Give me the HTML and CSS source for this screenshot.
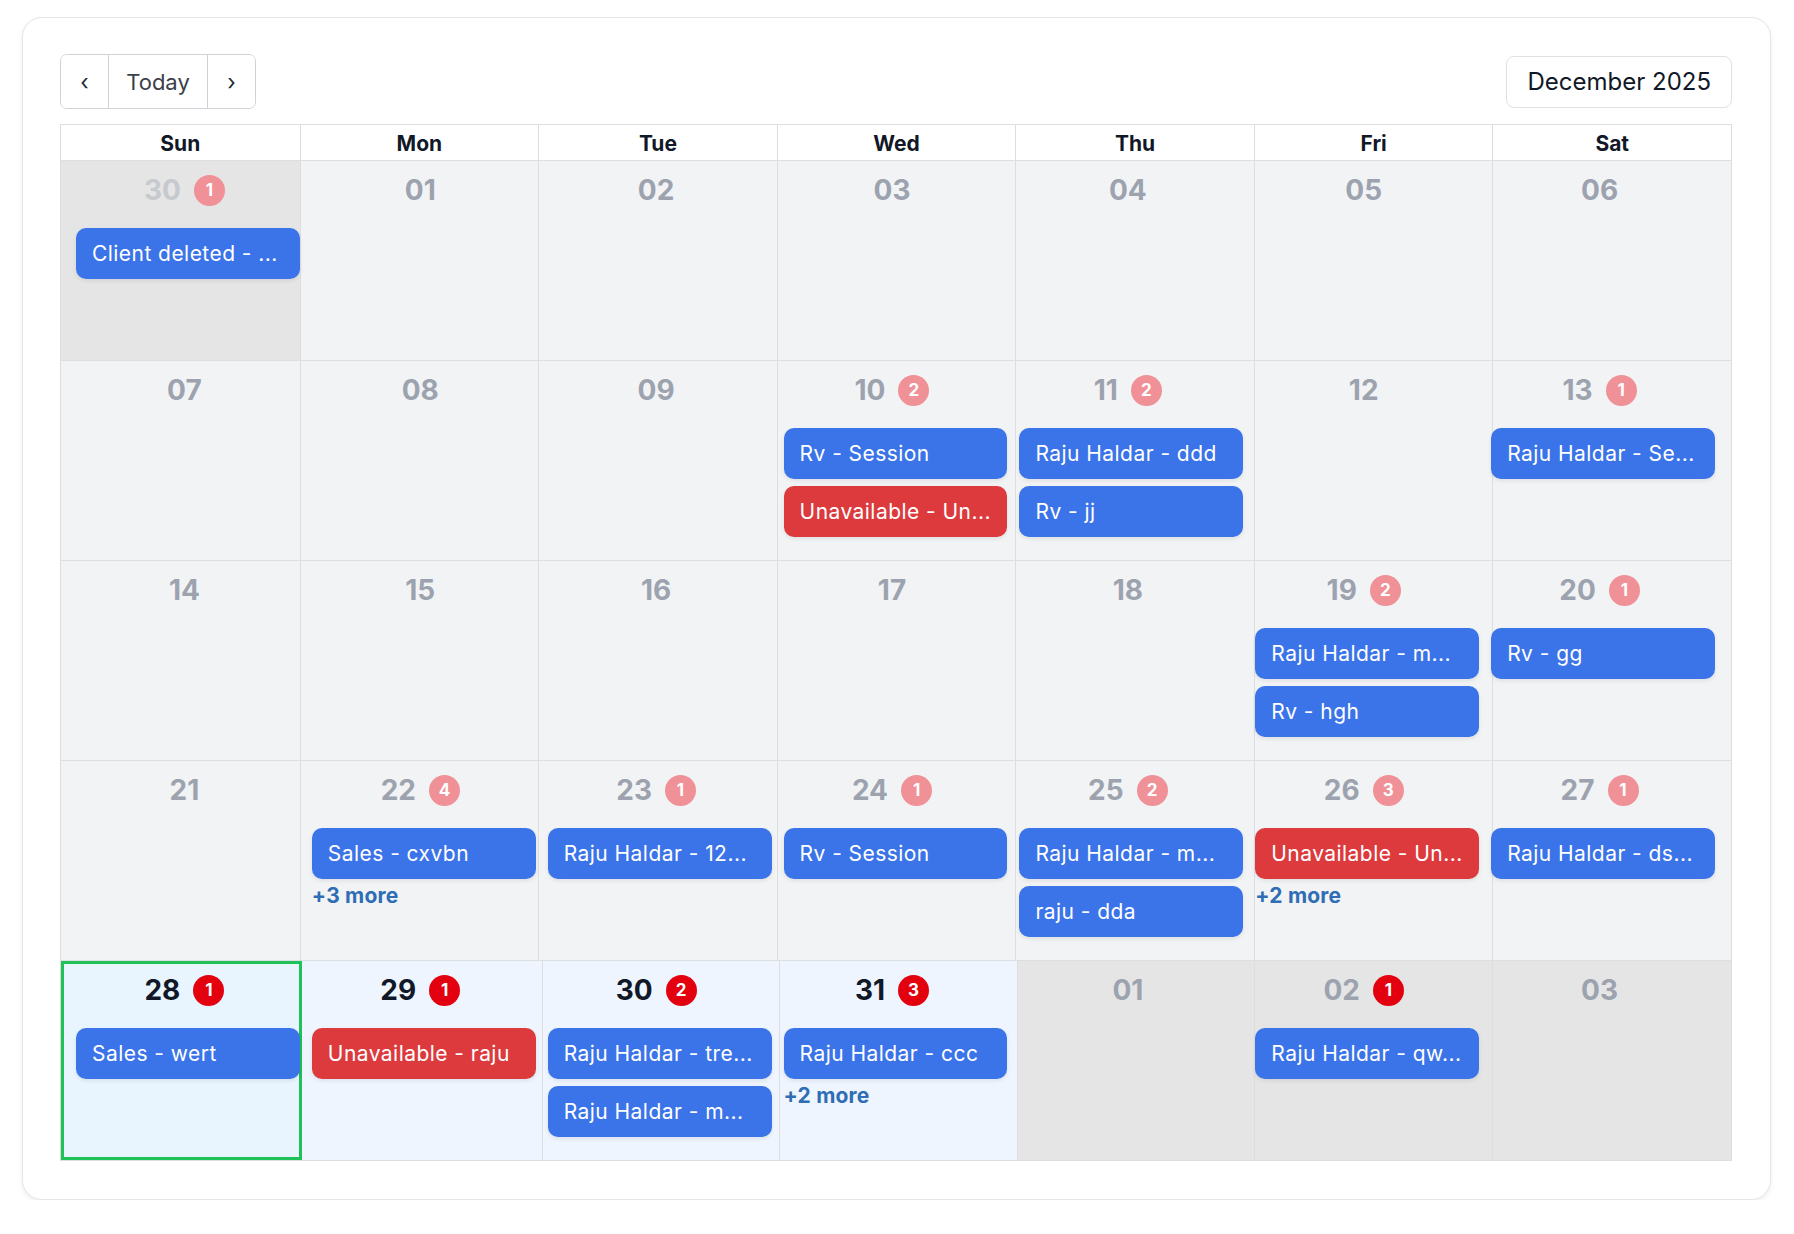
FILE: index.html
```html
<!DOCTYPE html>
<html lang="en">
<head>
    <meta charset="UTF-8">
    <meta name="viewport" content="width=device-width, initial-scale=1.0">
    <title>Calendar</title>
    <link rel="stylesheet" href="styles.css">
</head>
<body>

<div class="page">
    <div class="card">

        <div class="toolbar">
            <div class="nav-group">
                <button class="nav-btn">&lsaquo;</button>
                <button class="nav-btn today-btn">Today</button>
                <button class="nav-btn">&rsaquo;</button>
            </div>
            <div class="month-label">December 2025</div>
        </div>

        <div class="calendar">
            <div class="weekdays">
                <div>Sun</div><div>Mon</div><div>Tue</div><div>Wed</div><div>Thu</div><div>Fri</div><div>Sat</div>
            </div>

            <!-- week 1 -->
            <div class="week">
                <div class="week-bg">
                    <div class="bg-cell other"></div>
                    <div class="bg-cell"></div>
                    <div class="bg-cell"></div>
                    <div class="bg-cell"></div>
                    <div class="bg-cell"></div>
                    <div class="bg-cell"></div>
                    <div class="bg-cell"></div>
                </div>
                <div class="week-days">
                    <div class="day">
                        <div class="day-head"><span class="day-num faded">30</span><span class="badge dim">1</span></div>
                        <div class="events">
                            <div class="event">Client deleted - ...</div>
                        </div>
                    </div>
                    <div class="day"><div class="day-head"><span class="day-num">01</span></div></div>
                    <div class="day"><div class="day-head"><span class="day-num">02</span></div></div>
                    <div class="day"><div class="day-head"><span class="day-num">03</span></div></div>
                    <div class="day"><div class="day-head"><span class="day-num">04</span></div></div>
                    <div class="day"><div class="day-head"><span class="day-num">05</span></div></div>
                    <div class="day"><div class="day-head"><span class="day-num">06</span></div></div>
                </div>
            </div>

            <!-- week 2 -->
            <div class="week">
                <div class="week-bg">
                    <div class="bg-cell"></div>
                    <div class="bg-cell"></div>
                    <div class="bg-cell"></div>
                    <div class="bg-cell"></div>
                    <div class="bg-cell"></div>
                    <div class="bg-cell"></div>
                    <div class="bg-cell"></div>
                </div>
                <div class="week-days">
                    <div class="day"><div class="day-head"><span class="day-num">07</span></div></div>
                    <div class="day"><div class="day-head"><span class="day-num">08</span></div></div>
                    <div class="day"><div class="day-head"><span class="day-num">09</span></div></div>
                    <div class="day">
                        <div class="day-head"><span class="day-num">10</span><span class="badge dim">2</span></div>
                        <div class="events">
                            <div class="event">Rv - Session</div>
                            <div class="event red">Unavailable - Un...</div>
                        </div>
                    </div>
                    <div class="day">
                        <div class="day-head"><span class="day-num">11</span><span class="badge dim">2</span></div>
                        <div class="events">
                            <div class="event">Raju Haldar - ddd</div>
                            <div class="event">Rv - jj</div>
                        </div>
                    </div>
                    <div class="day"><div class="day-head"><span class="day-num">12</span></div></div>
                    <div class="day">
                        <div class="day-head"><span class="day-num">13</span><span class="badge dim">1</span></div>
                        <div class="events">
                            <div class="event">Raju Haldar - Se...</div>
                        </div>
                    </div>
                </div>
            </div>

            <!-- week 3 -->
            <div class="week">
                <div class="week-bg">
                    <div class="bg-cell"></div>
                    <div class="bg-cell"></div>
                    <div class="bg-cell"></div>
                    <div class="bg-cell"></div>
                    <div class="bg-cell"></div>
                    <div class="bg-cell"></div>
                    <div class="bg-cell"></div>
                </div>
                <div class="week-days">
                    <div class="day"><div class="day-head"><span class="day-num">14</span></div></div>
                    <div class="day"><div class="day-head"><span class="day-num">15</span></div></div>
                    <div class="day"><div class="day-head"><span class="day-num">16</span></div></div>
                    <div class="day"><div class="day-head"><span class="day-num">17</span></div></div>
                    <div class="day"><div class="day-head"><span class="day-num">18</span></div></div>
                    <div class="day">
                        <div class="day-head"><span class="day-num">19</span><span class="badge dim">2</span></div>
                        <div class="events">
                            <div class="event">Raju Haldar - m...</div>
                            <div class="event">Rv - hgh</div>
                        </div>
                    </div>
                    <div class="day">
                        <div class="day-head"><span class="day-num">20</span><span class="badge dim">1</span></div>
                        <div class="events">
                            <div class="event">Rv - gg</div>
                        </div>
                    </div>
                </div>
            </div>

            <!-- week 4 -->
            <div class="week">
                <div class="week-bg">
                    <div class="bg-cell"></div>
                    <div class="bg-cell"></div>
                    <div class="bg-cell"></div>
                    <div class="bg-cell"></div>
                    <div class="bg-cell"></div>
                    <div class="bg-cell"></div>
                    <div class="bg-cell"></div>
                </div>
                <div class="week-days">
                    <div class="day"><div class="day-head"><span class="day-num">21</span></div></div>
                    <div class="day">
                        <div class="day-head"><span class="day-num">22</span><span class="badge dim">4</span></div>
                        <div class="events">
                            <div class="event">Sales - cxvbn</div>
                            <a class="more">+3 more</a>
                        </div>
                    </div>
                    <div class="day">
                        <div class="day-head"><span class="day-num">23</span><span class="badge dim">1</span></div>
                        <div class="events">
                            <div class="event">Raju Haldar - 12...</div>
                        </div>
                    </div>
                    <div class="day">
                        <div class="day-head"><span class="day-num">24</span><span class="badge dim">1</span></div>
                        <div class="events">
                            <div class="event">Rv - Session</div>
                        </div>
                    </div>
                    <div class="day">
                        <div class="day-head"><span class="day-num">25</span><span class="badge dim">2</span></div>
                        <div class="events">
                            <div class="event">Raju Haldar - m...</div>
                            <div class="event">raju - dda</div>
                        </div>
                    </div>
                    <div class="day">
                        <div class="day-head"><span class="day-num">26</span><span class="badge dim">3</span></div>
                        <div class="events">
                            <div class="event red">Unavailable - Un...</div>
                            <a class="more">+2 more</a>
                        </div>
                    </div>
                    <div class="day">
                        <div class="day-head"><span class="day-num">27</span><span class="badge dim">1</span></div>
                        <div class="events">
                            <div class="event">Raju Haldar - ds...</div>
                        </div>
                    </div>
                </div>
            </div>

            <!-- week 5 (current) -->
            <div class="week">
                <div class="week-bg last">
                    <div class="bg-cell today"></div>
                    <div class="bg-cell current"></div>
                    <div class="bg-cell current"></div>
                    <div class="bg-cell current"></div>
                    <div class="bg-cell other"></div>
                    <div class="bg-cell other"></div>
                    <div class="bg-cell other"></div>
                </div>
                <div class="week-days">
                    <div class="day">
                        <div class="day-head"><span class="day-num now">28</span><span class="badge">1</span></div>
                        <div class="events">
                            <div class="event">Sales - wert</div>
                        </div>
                    </div>
                    <div class="day">
                        <div class="day-head"><span class="day-num now">29</span><span class="badge">1</span></div>
                        <div class="events">
                            <div class="event red">Unavailable - raju</div>
                        </div>
                    </div>
                    <div class="day">
                        <div class="day-head"><span class="day-num now">30</span><span class="badge">2</span></div>
                        <div class="events">
                            <div class="event">Raju Haldar - tre...</div>
                            <div class="event">Raju Haldar - m...</div>
                        </div>
                    </div>
                    <div class="day">
                        <div class="day-head"><span class="day-num now">31</span><span class="badge">3</span></div>
                        <div class="events">
                            <div class="event">Raju Haldar - ccc</div>
                            <a class="more">+2 more</a>
                        </div>
                    </div>
                    <div class="day"><div class="day-head"><span class="day-num">01</span></div></div>
                    <div class="day">
                        <div class="day-head"><span class="day-num">02</span><span class="badge">1</span></div>
                        <div class="events">
                            <div class="event">Raju Haldar - qw...</div>
                        </div>
                    </div>
                    <div class="day"><div class="day-head"><span class="day-num">03</span></div></div>
                </div>
            </div>
        </div>

    </div>
</div>

</body>
</html>
```

FILE: styles.css
```css
* {
    box-sizing: border-box;
}
body {
    margin: 0;
    font-family: Inter, "Noto Sans", sans-serif;
    background-color: #fff;
    color: #111827;
}
.page {
    padding: 17px 23px 0 22px;
}
.card {
    background-color: #fff;
    border: 1px solid #e4e6e9;
    border-radius: 20px;
    box-shadow: 0 2px 5px rgba(0, 0, 0, 0.07);
    padding: 36px 38px 38px 37px;
}

/* toolbar */
.toolbar {
    display: flex;
    justify-content: space-between;
    align-items: center;
    margin-bottom: 15px;
}
.nav-group {
    display: flex;
    height: 55px;
    border: 1px solid #cfd3d8;
    border-radius: 7px;
    overflow: hidden;
}
.nav-btn {
    width: 47px;
    padding: 0;
    border: none;
    border-left: 1px solid #cfd3d8;
    background-color: #fff;
    font-family: inherit;
    font-size: 22px;
    color: #1f2937;
    cursor: pointer;
}
.nav-btn:first-child {
    border-left: none;
}
.nav-btn:last-child {
    width: 48px;
}
.today-btn {
    width: 99px;
    color: #3b4049;
}
.month-label {
    height: 52px;
    padding: 0 20px;
    border: 1px solid #dfe2e5;
    border-radius: 8px;
    font-size: 24px;
    line-height: 50px;
    color: #111827;
}

/* grid */
.calendar {
    border: 1px solid #dcdee2;
}
.weekdays {
    display: grid;
    grid-template-columns: repeat(7, 1fr);
    height: 35px;
    background-color: #fff;
}
.weekdays div {
    border-left: 1px solid #dcdee2;
    text-align: center;
    font-size: 21px;
    font-weight: 700;
    line-height: 38px;
    overflow: hidden;
}
.weekdays div:first-child {
    border-left: none;
}
.week {
    display: grid;
    height: 200px;
    border-top: 1px solid #dcdee2;
}
.week-bg,
.week-days {
    grid-area: 1 / 1;
}
.week-bg {
    display: grid;
    grid-template-columns: repeat(7, 1fr);
}
.week-bg.last {
    grid-template-columns: 241px 239.5px 237.5px 237.5px 237.5px 238px 1fr;
}
.bg-cell {
    background-color: #f2f3f5;
    border-left: 1px solid #dcdee2;
}
.bg-cell:first-child {
    border-left: none;
}
.bg-cell.other {
    background-color: #e5e5e5;
}
.bg-cell.current {
    background-color: #eef5fe;
}
.bg-cell.today {
    background-color: #e8f4fe;
    border: 3px solid #1ec257;
}
.bg-cell.today + .bg-cell {
    border-left-color: transparent;
}

/* day contents sit on top of the background cells */
.week-days {
    display: grid;
    grid-template-columns: repeat(7, 1fr);
    padding: 0 10px 0 9px;
}
.day {
    min-width: 0;
    padding-top: 13px;
}
.day-head {
    display: flex;
    justify-content: center;
    align-items: center;
    gap: 13px;
    height: 32px;
    padding-right: 7px;
}
.day-num {
    font-size: 28px;
    font-weight: 700;
    line-height: 32px;
    color: #9ca3af;
}
.day-num.faded {
    color: #c6c9cd;
}
.day-num.now {
    color: #111827;
}
.badge {
    display: flex;
    justify-content: center;
    align-items: center;
    width: 31px;
    height: 31px;
    border-radius: 50%;
    background-color: #e3000f;
    color: #fff;
    font-size: 17px;
    font-weight: 700;
}
.badge.dim {
    background-color: #ef9197;
}
.events {
    display: flex;
    flex-direction: column;
    gap: 7px;
    margin: 22px 6px 0;
}
.event {
    height: 51px;
    padding: 0 15px 0 16px;
    border-radius: 10px;
    background-color: #3b73e9;
    box-shadow: 0 2px 4px rgba(0, 0, 0, 0.08);
    color: #fff;
    font-size: 21px;
    letter-spacing: 0.45px;
    line-height: 51px;
    white-space: nowrap;
    overflow: hidden;
    cursor: pointer;
}
.event.red {
    background-color: #dc3a3d;
}
.more {
    margin-top: -2px;
    font-size: 21px;
    font-weight: 700;
    letter-spacing: 0.2px;
    line-height: 24px;
    color: #2f6db4;
    cursor: pointer;
}
```
